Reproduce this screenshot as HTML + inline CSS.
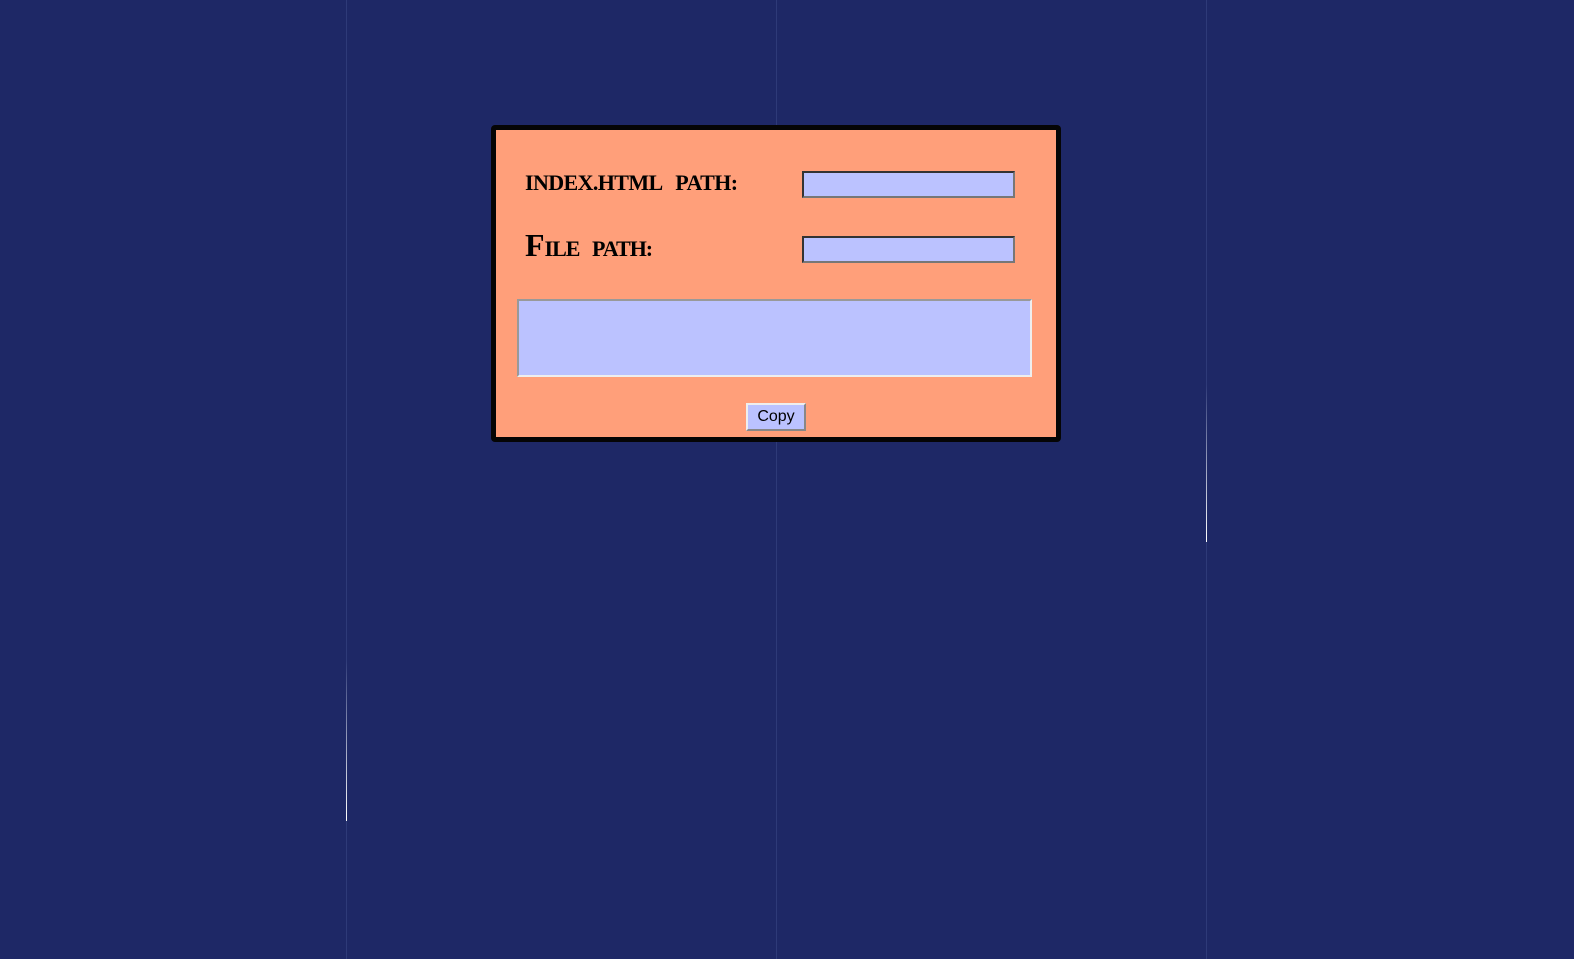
<!DOCTYPE html>
<html><head><style>
html,body{margin:0;padding:0}
body{width:1574px;height:959px;background:#1e2866;position:relative;overflow:hidden;font-family:"Liberation Serif",serif}
.vl{position:absolute;top:0;width:1px;height:959px;background:#2e3a78}
.wl{position:absolute;width:1px;background:linear-gradient(#2e3a78,#fff)}
.panel{position:absolute;left:491px;top:125px;width:560px;height:307px;border:5px solid #050505;border-radius:4px;background:#ff9f7a}
.lbl{position:absolute;left:29px;font-weight:bold;font-size:22px;color:#000;letter-spacing:-1px;word-spacing:8px;white-space:nowrap;line-height:30px}
.lbl b{font-size:32px;letter-spacing:0}
.inp{position:absolute;left:306px;width:209px;height:23px;background:#bbc2ff;border:2px solid;border-color:#333 #777 #777 #333}
.ta{position:absolute;left:21px;top:169px;width:511px;height:74px;background:#bbc2ff;border:2px solid;border-color:#999 #eee #eee #999}
.btn{position:absolute;left:250px;top:273px;width:56px;height:24px;background:#bbc2ff;border:2px solid;border-color:#eee #888 #888 #eee;font:16px "Liberation Sans",sans-serif;text-align:center;line-height:24px;color:#000;box-sizing:content-box}
</style></head><body>
<div class="vl" style="left:346px"></div>
<div class="vl" style="left:776px"></div>
<div class="vl" style="left:1206px"></div>
<div class="wl" style="left:1206px;top:385px;height:157px"></div>
<div class="wl" style="left:346px;top:660px;height:161px"></div>
<div class="panel">
<div class="lbl" style="top:38px;letter-spacing:-0.6px;word-spacing:9px">INDEX.HTML PATH:</div>
<div class="lbl" style="top:100px"><b>F</b>ILE PATH:</div>
<div class="inp" style="top:41px"></div>
<div class="inp" style="top:106px"></div>
<div class="ta"></div>
<div class="btn">Copy</div>
</div>
</body></html>
